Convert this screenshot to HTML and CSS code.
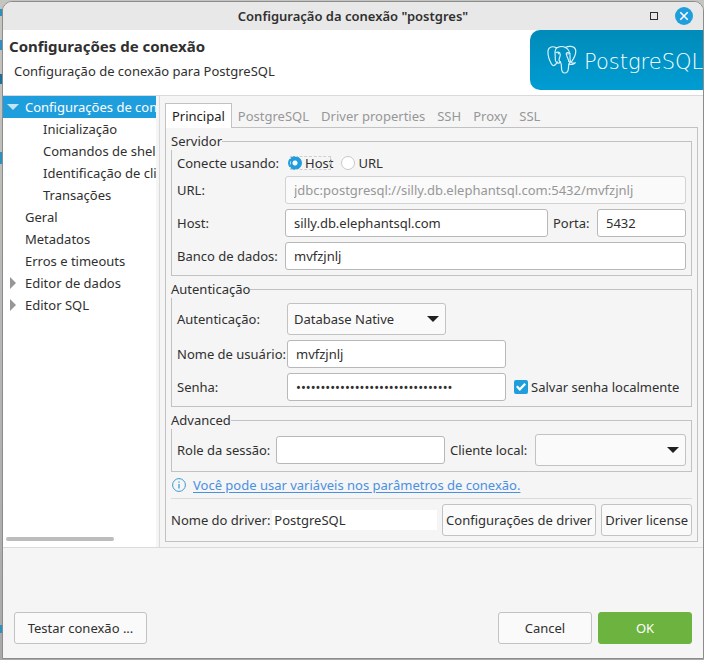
FILE: index.html
```html
<!DOCTYPE html>
<html lang="pt-BR">
<head>
<meta charset="utf-8">
<title>Configuração da conexão "postgres"</title>
<link rel="stylesheet" href="styles.css">
</head>
<body>
<div class="window">
  <header class="titlebar">
    <h1 class="window-title">Configuração da conexão "postgres"</h1>
    <div class="window-controls">
      <button class="maximize" type="button" aria-label="Maximizar"></button>
      <button class="close" type="button" aria-label="Fechar">
        <svg width="18" height="18" viewBox="0 0 18 18" fill="none" stroke="#fff" stroke-width="1.6"><path d="M5.3 5.3l7.4 7.4M12.700 5.3l-7.400 7.400"/></svg>
      </button>
    </div>
  </header>

  <section class="banner">
    <div class="banner-text">
      <h2>Configurações de conexão</h2>
      <p>Configuração de conexão para PostgreSQL</p>
    </div>
    <div class="logo">
      <svg class="elephant" width="30" height="30" viewBox="0 0 30 30" fill="none" stroke="#d9f1fb" stroke-width="1.2" stroke-linecap="round" stroke-linejoin="round">
        <path d="M9.500 3C6 .7 1.500 1.700 1 6c-.3 4 1.500 9.500 3.500 13 1.300 2.200 3 2 4.300.2l1.700-2.200"/>
        <path d="M9.500 3c-2 2.500-1.700 5-1.300 7.500.3 2.800-.4 4.500.6 6 1 1.700 3.400 2.300 4.600.6"/>
        <path d="M9.500 3C12 1.300 16 1 18.500 2.500 21.500.8 27 .7 28.500 4.500c1 3.500-2 9.500-4.500 13"/>
        <path d="M18.500 2.500c3.500 2 4.800 6.200 4.500 9-.2 2.300 0 4 1 6 1.400.8 3 .7 4.300.2-1 1.800-4.600 2.300-6.300 1.300"/>
        <path d="M13.400 17c1.200 1.500 1 3.500 1.100 6 .1 3 .8 5 3.200 5 2.800 0 3.500-2 3.700-4.500.1-2 .2-3.500.6-4.700 1.200-.8 1-1.800-.2-2.600"/>
        <path d="M13.400 17c-1.800-1-1.300-3.500-.6-5 .8-1.500.5-3-.1-4.200-1.100-1-2.600-.8-3.600-.2M22.800 8.500c-1-.9-2.600-1-3.500-.2-.4 2.500 2 4.500 2.500 8"/>
        <path d="M11.300 8.700h.6M20.800 9h.5"/>
      </svg>
      <span class="wordmark">PostgreSQL</span>
    </div>
  </section>

  <div class="content">
    <nav class="sidebar">
      <ul class="tree">
        <li class="node selected"><span class="arrow open"></span>Configurações de conexão</li>
        <li class="node child">Inicialização</li>
        <li class="node child">Comandos de shell</li>
        <li class="node child">Identificação de cliente</li>
        <li class="node child">Transações</li>
        <li class="node">Geral</li>
        <li class="node">Metadatos</li>
        <li class="node">Erros e timeouts</li>
        <li class="node"><span class="arrow"></span>Editor de dados</li>
        <li class="node"><span class="arrow"></span>Editor SQL</li>
      </ul>
      <div class="scroll-thumb"></div>
    </nav>

    <main class="main">
      <div class="tabs" role="tablist">
        <button class="tab active" type="button" role="tab" aria-selected="true">Principal</button>
        <button class="tab" type="button" role="tab">PostgreSQL</button>
        <button class="tab" type="button" role="tab">Driver properties</button>
        <button class="tab" type="button" role="tab">SSH</button>
        <button class="tab" type="button" role="tab">Proxy</button>
        <button class="tab" type="button" role="tab">SSL</button>
      </div>

      <div class="panel">
        <fieldset class="group server">
          <legend>Servidor</legend>
          <div class="row short">
            <span class="label">Conecte usando:</span>
            <div class="radios">
              <label class="focused"><input type="radio" name="mode" checked>Host</label>
              <label><input type="radio" name="mode">URL</label>
            </div>
          </div>
          <div class="row">
            <label class="label" for="url">URL:</label>
            <input class="field" id="url" type="text" value="jdbc:postgresql://silly.db.elephantsql.com:5432/mvfzjnlj" disabled>
          </div>
          <div class="row">
            <label class="label" for="host">Host:</label>
            <input class="field" id="host" type="text" value="silly.db.elephantsql.com">
            <label class="port-label" for="port">Porta:</label>
            <input class="field port" id="port" type="text" value="5432">
          </div>
          <div class="row">
            <label class="label" for="db">Banco de dados:</label>
            <input class="field" id="db" type="text" value="mvfzjnlj">
          </div>
        </fieldset>

        <fieldset class="group auth">
          <legend>Autenticação</legend>
          <div class="row">
            <label class="label" for="auth">Autenticação:</label>
            <div class="select auth-select"><select id="auth"><option>Database Native</option></select></div>
          </div>
          <div class="row">
            <label class="label" for="user">Nome de usuário:</label>
            <input class="field user" id="user" type="text" value="mvfzjnlj">
          </div>
          <div class="row">
            <label class="label" for="pass">Senha:</label>
            <input class="field user" id="pass" type="password" value="abcdefghijklmnopqrstuvwxyz012345">
            <label class="check"><input type="checkbox" checked>Salvar senha localmente</label>
          </div>
        </fieldset>

        <fieldset class="group advanced">
          <legend>Advanced</legend>
          <div class="row">
            <label class="label" for="role">Role da sessão:</label>
            <input class="field" id="role" type="text">
            <label class="client-label" for="client">Cliente local:</label>
            <div class="select client-select"><select id="client"><option></option></select></div>
          </div>
        </fieldset>

        <div class="hint">
          <svg width="14" height="14" viewBox="0 0 14 14" fill="none" stroke="#3c9bd6"><circle cx="7" cy="7" r="6.400"/><path d="M7 6v4.500M7 3.500v1.200" stroke-width="1.300"/></svg>
          <a href="#">Você pode usar variáveis nos parâmetros de conexão.</a>
        </div>

        <div class="driver">
          <label for="driver">Nome do driver:</label>
          <input id="driver" type="text" value="PostgreSQL" readonly>
          <button class="button" type="button">Configurações de driver</button>
          <button class="button" type="button">Driver license</button>
        </div>
      </div>
    </main>
  </div>

  <footer class="footer">
    <button class="button test" type="button">Testar conexão ...</button>
    <button class="button wide" type="button">Cancel</button>
    <button class="button wide primary" type="button">OK</button>
  </footer>
</div>
</body>
</html>
```
FILE: styles.css
```css
* { box-sizing: border-box; }

body {
  margin: 0;
  min-height: 100vh;
  padding: 1px 0 1px 2px;
  display: flex;
  background:
    linear-gradient(#2f8fbd, #2f8fbd) 0 9px / 3px 7px no-repeat,
    linear-gradient(#2f8fbd, #2f8fbd) 0 40px / 3px 10px no-repeat,
    linear-gradient(#1d6f96, #1d6f96) 0 74px / 3px 10px no-repeat,
    linear-gradient(#2f8fbd, #2f8fbd) 0 152px / 3px 12px no-repeat,
    linear-gradient(#2f8fbd, #2f8fbd) 0 625px / 3px 8px no-repeat,
    linear-gradient(#c4c4c0, #a9a9a9);
  color: #303030;
  font: 13px/18px "Noto Sans", "Open Sans", sans-serif;
}

button, input, select { font: inherit; color: inherit; }

h1, h2, p, ul { margin: 0; padding: 0; }

.window {
  flex: 1;
  min-width: 0;
  display: flex;
  flex-direction: column;
  overflow: hidden;
  border: 1px solid #8c8c8c;
  border-radius: 10px 10px 0 0;
  background: #f5f5f5;
}

.titlebar {
  display: grid;
  grid-template-columns: 1fr auto 1fr;
  align-items: center;
  height: 28px;
  background: #e8e8e8;
}

.window-title {
  grid-column: 2;
  font-size: 13px;
  font-weight: 600;
}

.window-controls {
  display: flex;
  align-items: center;
  justify-content: flex-end;
  gap: 17px;
  padding-right: 10px;
}

.maximize {
  width: 8px;
  height: 8px;
  padding: 0;
  border: 1px solid #303030;
  background: none;
}

.close {
  width: 18px;
  height: 18px;
  padding: 0;
  border: 0;
  border-radius: 50%;
  background: #1f9ede;
}

.close svg { display: block; }

.banner {
  display: flex;
  justify-content: space-between;
  height: 66px;
  border-bottom: 1px solid #dadada;
  background: #fff;
}

.banner-text { padding: 7px 6px; }

.banner h2 { font-size: 15px; line-height: 18px; }

.banner p { padding: 7px 5px; }

.logo {
  display: flex;
  align-items: center;
  gap: 7px;
  width: 173px;
  height: 60px;
  padding-left: 17px;
  overflow: hidden;
  border-radius: 10px 0 0 10px;
  background: linear-gradient(#008bb9, #009cd2);
}

.elephant { flex: none; }

.wordmark {
  padding-top: 4px;
  color: #fff;
  font: 200 21px/24px "DejaVu Sans Light", "DejaVu Sans", sans-serif;
}

.content {
  display: flex;
  border-bottom: 1px solid #dadada;
}

.sidebar {
  display: flex;
  flex-direction: column;
  justify-content: space-between;
  flex: none;
  width: 157px;
  border-right: 1px solid #dadada;
  background: linear-gradient(#fff, #fff) 0 0 / 153px 100% no-repeat;
}

.tree {
  width: 153px;
  list-style: none;
}

.node {
  position: relative;
  overflow: hidden;
  padding-left: 22px;
  line-height: 22px;
  white-space: nowrap;
}

.child { padding-left: 40px; }

.selected { background: #1f9ede; color: #fff; }

.arrow {
  position: absolute;
  top: 5px;
  left: 7px;
  width: 6px;
  height: 12px;
  background: #979797;
  clip-path: polygon(0 0, 100% 50%, 0 100%);
}

.arrow.open {
  top: 8px;
  left: 4px;
  width: 12px;
  height: 6px;
  background: #c5e5f7;
  clip-path: polygon(0 0, 100% 0, 50% 100%);
}

.scroll-thumb {
  width: 108px;
  height: 4px;
  margin: 0 3px 6px;
  border-radius: 2px;
  background: #bcbcbc;
}

.main {
  flex: 1;
  min-width: 0;
  padding: 7px 5px 5px;
}

.tabs { display: flex; }

.tab {
  position: relative;
  height: 24px;
  padding: 0 5px;
  border: 1px solid transparent;
  border-bottom: 0;
  background: none;
  color: #979797;
}

.tab.active {
  border-color: #c2c2c2;
  margin-bottom: -1px;
  height: 25px;
  padding: 0 6px;
  background: #fff;
  color: #202020;
  z-index: 1;
}

.panel {
  display: flex;
  flex-direction: column;
  gap: 4px;
  padding: 4px 5px 5px;
  border: 1px solid #c2c2c2;
}

.group {
  min-width: 0;
  margin: 0;
  padding: 5px;
  border: 1px solid #c2c2c2;
}

.group legend {
  height: 18px;
  margin-left: -6px;
  padding: 0;
}

.row {
  display: flex;
  align-items: center;
}

.row + .row { margin-top: 5px; }

.short { height: 16px; }

.label { flex: none; white-space: nowrap; }

.server .label { width: 108px; }
.auth .label { width: 110px; }
.advanced .label { width: 99px; }

.field {
  flex: 1;
  min-width: 0;
  height: 28px;
  padding: 0 8px;
  border: 1px solid #b8b8b8;
  border-radius: 3px;
  background: #fff;
}

.field:disabled {
  border-color: #d2d2d2;
  background: #fafafa;
  color: #979797;
}

.port-label { flex: none; width: 49px; padding-left: 5px; }

.port { flex: none; width: 89px; }

.user { flex: none; width: 219px; }

.client-label { flex: none; width: 90px; padding-left: 5px; }

.radios { display: flex; gap: 8px; padding-left: 3px; }

.radios label { display: flex; align-items: center; gap: 3px; }

.focused { outline: 1px dashed #d0d0d0; outline-offset: -3px; }

.radios input {
  appearance: none;
  width: 14px;
  height: 14px;
  margin: 0;
  border: 1px solid #c8c8c8;
  border-radius: 50%;
  background: #fff;
}

.radios input:checked {
  border-color: #1f9ede;
  background: radial-gradient(circle, #fff 2px, #1f9ede 3px);
}

.check {
  display: flex;
  align-items: center;
  gap: 3px;
  padding-left: 8px;
  white-space: nowrap;
}

.check input {
  appearance: none;
  display: grid;
  place-items: center;
  width: 14px;
  height: 14px;
  margin: 0;
  border-radius: 2px;
  background: #1f9ede;
}

.check input::before {
  content: "";
  width: 10px;
  height: 8px;
  background: #fff;
  clip-path: polygon(0 50%, 16% 32%, 38% 58%, 84% 0, 100% 18%, 38% 100%);
}

.select { position: relative; flex: none; }

.auth-select { width: 159px; }

.client-select { width: 151px; }

.select select {
  appearance: none;
  display: block;
  width: 100%;
  height: 32px;
  padding: 0 24px 0 6px;
  border: 1px solid #c2c2c2;
  border-radius: 3px;
  background: #fafafa;
}

.select::after {
  content: "";
  position: absolute;
  top: 13px;
  right: 7px;
  width: 12px;
  height: 6px;
  background: #202020;
  clip-path: polygon(0 0, 100% 0, 50% 100%);
  pointer-events: none;
}

.hint {
  display: flex;
  align-items: center;
  gap: 7px;
  height: 18px;
  padding-left: 1px;
}

.hint a { color: #4a90e2; text-underline-offset: 2px; }

.driver {
  display: flex;
  align-items: center;
  gap: 5px;
  padding-top: 5px;
  border-top: 1px solid #dadada;
  white-space: nowrap;
}

.driver input {
  flex: 1;
  min-width: 0;
  height: 20px;
  padding: 0 2px;
  border: 0;
  background: #fff;
}

.driver label { margin-right: -3px; }

.button {
  height: 32px;
  padding: 0 3px;
  border: 1px solid #c2c2c2;
  border-radius: 3px;
  background: #fafafa;
  white-space: nowrap;
}

.footer {
  flex: 1;
  display: flex;
  align-items: flex-end;
  gap: 6px;
  padding: 0 11px 14px;
}

.test { min-width: 133px; margin-right: auto; }

.wide { min-width: 94px; }

.primary {
  border-color: #6cb33f;
  background: #6cb33f;
  color: #fff;
}
```
